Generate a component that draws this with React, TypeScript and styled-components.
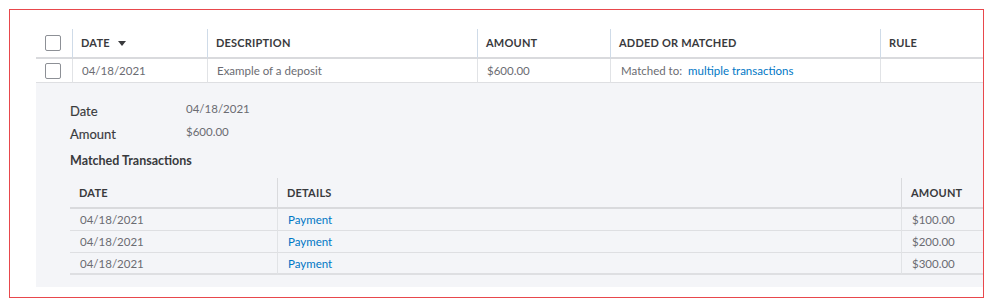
import React from "react";
import styled, { createGlobalStyle } from "styled-components";

const Global = createGlobalStyle`
  html, body { margin: 0; padding: 0; background: #ffffff; }
  body { font-family: Lato, "Open Sans", Arial, sans-serif; }
  * { box-sizing: border-box; }
`;

const Frame = styled.div`
  margin: 9px 0 0 9px;
  width: 975px;
  height: 289px;
  border: 1px solid rgb(232, 72, 76);
  overflow: hidden;
  padding: 19px 0 0 26px;
`;

const Table = styled.div<{ $cols: string }>`
  display: grid;
  grid-template-columns: ${(p) => p.$cols};
  width: max-content;
`;

const HeadCell = styled.div<{ $sep?: boolean; $h?: number; $line?: string; $pad?: number }>`
  height: ${(p) => p.$h ?? 30}px;
  display: flex;
  align-items: center;
  gap: 8px;
  padding-left: ${(p) => p.$pad ?? 8}px;
  padding-bottom: 1px;
  border-bottom: 2px solid #d9dadd;
  border-left: ${(p) => (p.$sep ? `1px solid ${p.$line ?? "#cfdbe8"}` : "none")};
  font-size: 11px;
  font-weight: 700;
  color: #393a3d;
  letter-spacing: 0.2px;
  white-space: nowrap;
`;

const Cell = styled.div<{ $sep?: boolean; $h?: number; $pad?: number; $bottom?: number }>`
  height: ${(p) => p.$h ?? 24}px;
  display: flex;
  align-items: center;
  padding-left: ${(p) => p.$pad ?? 9}px;
  border-bottom: ${(p) => p.$bottom ?? 1}px solid #dedfe2;
  border-left: ${(p) => (p.$sep ? "1px solid #e1e3e6" : "none")};
  font-size: 11.5px;
  color: #6b6c72;
  white-space: nowrap;
`;

const CheckCell = styled.div<{ $h: number; $head?: boolean }>`
  height: ${(p) => p.$h}px;
  display: flex;
  align-items: center;
  padding-left: 9px;
  border-bottom: ${(p) => (p.$head ? "2px solid #d9dadd" : "1px solid #dedfe2")};
`;

const Checkbox = styled.span`
  width: 16px;
  height: 16px;
  border: 1px solid #8d9096;
  border-radius: 2px;
  background: #ffffff;
  display: inline-block;
`;

const SortArrow = styled.span`
  width: 0;
  height: 0;
  border-left: 4px solid transparent;
  border-right: 4px solid transparent;
  border-top: 5px solid #393a3d;
  margin-top: 1px;
`;

const Link = styled.span`
  color: #0077c5;
`;

const MatchedLabel = styled.span`
  margin-right: 6px;
`;

const Panel = styled.div`
  background: #f4f5f8;
  width: 1100px;
  padding: 16px 0 12px 34px;
`;

const Summary = styled.div`
  display: grid;
  grid-template-columns: 116px auto;
  grid-auto-rows: 23px;
  align-items: center;
`;

const Label = styled.div`
  font-size: 13px;
  color: #393a3d;
  -webkit-text-stroke: 0.15px #393a3d;
`;

const Value = styled.div`
  font-size: 11.5px;
  color: #6b6c72;
  margin-top: -4px;
`;

const Title = styled.div`
  font-size: 12.5px;
  font-weight: 700;
  color: #393a3d;
  height: 20px;
  line-height: 20px;
  margin-top: 6px;
  margin-bottom: 7px;
`;

const mainCols = "36px 135px 270px 133px 270px 200px";
const innerCols = "207px 624px 200px";

const payments = [
  { date: "04/18/2021", details: "Payment", amount: "$100.00" },
  { date: "04/18/2021", details: "Payment", amount: "$200.00" },
  { date: "04/18/2021", details: "Payment", amount: "$300.00" },
];

export default function App() {
  return (
    <>
      <Global />
      <Frame>
        <Table $cols={mainCols}>
          <CheckCell $h={30} $head>
            <Checkbox />
          </CheckCell>
          <HeadCell $sep>
            DATE <SortArrow />
          </HeadCell>
          <HeadCell $sep>DESCRIPTION</HeadCell>
          <HeadCell $sep>AMOUNT</HeadCell>
          <HeadCell $sep>ADDED OR MATCHED</HeadCell>
          <HeadCell $sep>RULE</HeadCell>

          <CheckCell $h={24}>
            <Checkbox />
          </CheckCell>
          <Cell $sep>04/18/2021</Cell>
          <Cell $sep>Example of a deposit</Cell>
          <Cell $sep>$600.00</Cell>
          <Cell $sep $pad={10}>
            <MatchedLabel>Matched to:</MatchedLabel>
            <Link>multiple transactions</Link>
          </Cell>
          <Cell $sep />
        </Table>
        <Panel>
          <Summary>
            <Label>Date</Label>
            <Value>04/18/2021</Value>
            <Label>Amount</Label>
            <Value>$600.00</Value>
          </Summary>
          <Title>Matched Transactions</Title>
          <Table $cols={innerCols}>
            <HeadCell $h={31} $pad={9}>DATE</HeadCell>
            <HeadCell $h={31} $sep $line="#d9dadd" $pad={9}>DETAILS</HeadCell>
            <HeadCell $h={31} $sep $line="#d9dadd" $pad={9}>AMOUNT</HeadCell>
            {payments.map((p, i) => (
              <React.Fragment key={i}>
                <Cell $h={22} $pad={10} $bottom={i === payments.length - 1 ? 2 : 1}>{p.date}</Cell>
                <Cell $h={22} $sep $pad={10} $bottom={i === payments.length - 1 ? 2 : 1}>
                  <Link>{p.details}</Link>
                </Cell>
                <Cell $h={22} $sep $pad={10} $bottom={i === payments.length - 1 ? 2 : 1}>{p.amount}</Cell>
              </React.Fragment>
            ))}
          </Table>
        </Panel>
      </Frame>
    </>
  );
}
